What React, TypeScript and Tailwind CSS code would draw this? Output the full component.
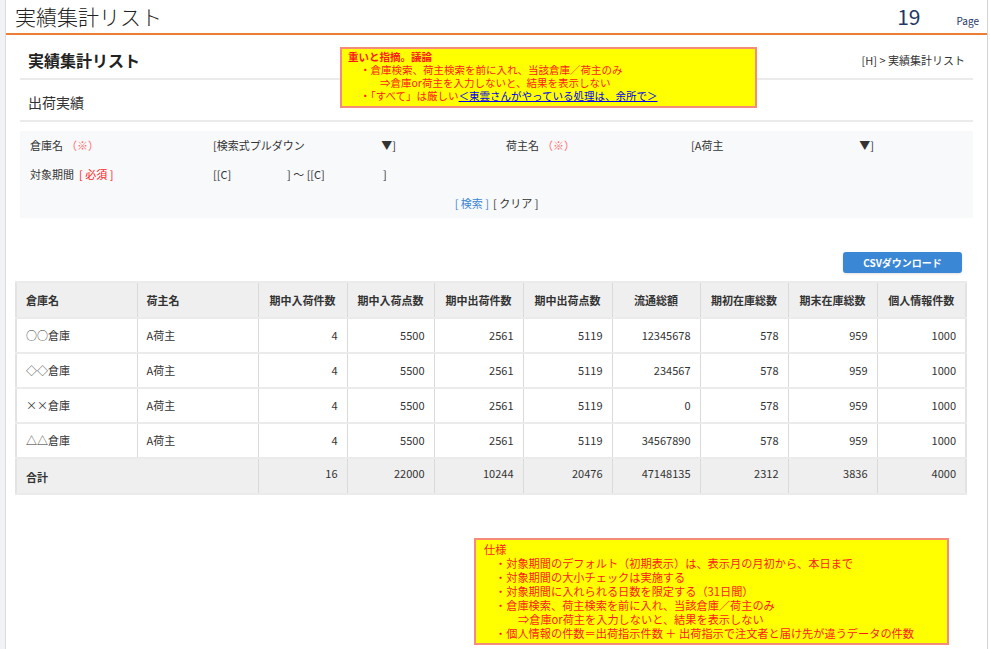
import React from "react";

const font = { fontFamily: '"Noto Sans CJK JP", "Noto Sans", sans-serif' };

type Row = {
  warehouse: string;
  shipper: string;
  values: number[];
};

const rows: Row[] = [
  { warehouse: "○○倉庫", shipper: "A荷主", values: [4, 5500, 2561, 5119, 12345678, 578, 959, 1000] },
  { warehouse: "◇◇倉庫", shipper: "A荷主", values: [4, 5500, 2561, 5119, 234567, 578, 959, 1000] },
  { warehouse: "××倉庫", shipper: "A荷主", values: [4, 5500, 2561, 5119, 0, 578, 959, 1000] },
  { warehouse: "△△倉庫", shipper: "A荷主", values: [4, 5500, 2561, 5119, 34567890, 578, 959, 1000] },
];

const totals = [16, 22000, 10244, 20476, 47148135, 2312, 3836, 4000];

const numberHeads = [
  "期中入荷件数",
  "期中入荷点数",
  "期中出荷件数",
  "期中出荷点数",
  "流通総額",
  "期初在庫総数",
  "期末在庫総数",
  "個人情報件数",
];

const colWidths = [121, 121, 89, 87, 89, 89, 88, 88, 89, 89];

const cell = "border-x border-x-[#dadada] border-y-2 border-y-[#ebebeb]";

function SearchPanel() {
  return (
    <div className="mt-[9px] bg-[#f8f9fb] pl-[10px] text-[11px] text-[#333]">
      <div className="grid h-[29px] grid-cols-[183px_293px_185px_1fr] items-center">
        <div>
          倉庫名<span className="ml-[3px] text-[#ff6b6b]">（※）</span>
        </div>
        <div className="flex w-[183px] justify-between">
          <span>[検索式プルダウン</span>
          <span>▼]</span>
        </div>
        <div>
          荷主名<span className="ml-[3px] text-[#ff6b6b]">（※）</span>
        </div>
        <div className="flex w-[183px] justify-between">
          <span>[A荷主</span>
          <span>▼]</span>
        </div>
      </div>
      <div className="grid h-[29px] grid-cols-[183px_293px_185px_1fr] items-center">
        <div>
          対象期間<span className="ml-[5px] text-[#ff2020]">[ 必須 ]</span>
        </div>
        <div className="flex">
          <span className="w-[74px]">[[C]</span>
          <span className="w-[96px]">] ～ [[C]</span>
          <span>]</span>
        </div>
      </div>
      <div className="flex h-[29px] items-center justify-center pr-[10px]">
        <span className="text-[#3b87d6]">[ 検索 ]</span>
        <span className="ml-[4px]">[ クリア ]</span>
      </div>
    </div>
  );
}

function ResultTable() {
  return (
    <table className="w-[950px] table-fixed border-collapse border-2 border-[#e3e3e3] text-[11px] text-[#333]">
      <colgroup>
        {colWidths.map((w, i) => (
          <col key={i} style={{ width: w }} />
        ))}
      </colgroup>
      <thead>
        <tr className="h-[36px] bg-[#efefef] font-bold">
          <th className={`${cell} pl-[9px] text-left`}>倉庫名</th>
          <th className={`${cell} pl-[9px] text-left`}>荷主名</th>
          {numberHeads.map((h) => (
            <th key={h} className={`${cell} text-center`}>
              {h}
            </th>
          ))}
        </tr>
      </thead>
      <tbody>
        {rows.map((r) => (
          <tr key={r.warehouse} className="h-[35px] bg-white">
            <td className={`${cell} pl-[9px]`}>{r.warehouse}</td>
            <td className={`${cell} pl-[9px]`}>{r.shipper}</td>
            {r.values.map((v, i) => (
              <td key={i} className={`${cell} pr-[9px] text-right`}>
                {v}
              </td>
            ))}
          </tr>
        ))}
        <tr className="h-[36px] bg-[#efefef]">
          <td colSpan={2} className={`${cell} pl-[9px] pt-[3px] font-bold`}>
            合計
          </td>
          {totals.map((v, i) => (
            <td key={i} className={`${cell} pb-[6px] pr-[9px] text-right`}>
              {v}
            </td>
          ))}
        </tr>
      </tbody>
    </table>
  );
}

export default function App() {
  return (
    <div className="flex min-h-screen bg-white" style={font}>
      <div className="w-[6px] shrink-0 border-r border-[#dadde2] bg-[#f1f2f5]" />

      <div className="relative w-[982px] shrink-0 border-r border-[#d4d4d4] pb-[10px]">
        {/* page header */}
        <header className="flex h-[35px] items-center justify-between border-b-2 border-[#ee7d35] pl-[9px] pr-[8px]">
          <h1 className="text-[21px] font-light leading-none text-[#222]">実績集計リスト</h1>
          <div className="flex items-baseline">
            <span className="text-[21px] leading-none text-[#1f3864]">19</span>
            <span className="ml-[36px] text-[10px] text-[#1f3864]">Page</span>
          </div>
        </header>

        <div className="px-[14px]">
          <div className="flex items-center justify-between border-b-2 border-[#ebebeb] pb-[8px] pl-[8px] pr-[8px] pt-[16px]">
            <h2 className="text-[16px] font-bold leading-[19px] text-[#222]">実績集計リスト</h2>
            <span className="text-[11px] text-[#333]">[H] &gt; 実績集計リスト</span>
          </div>
          <div className="border-b-2 border-[#ebebeb] pb-[9px] pl-[8px] pt-[13px] text-[14px] leading-[18px] text-[#333]">
            出荷実績
          </div>

          <SearchPanel />
        </div>

        <div className="pl-[9px] pr-[22px]">
          <div className="mt-[34px] flex justify-end pr-[3px]">
            <button className="h-[21px] w-[119px] rounded-[3px] bg-[#3a87d5] text-[10px] font-bold text-white shadow-sm">
              CSVダウンロード
            </button>
          </div>
          <div className="mt-[8px]">
            <ResultTable />
          </div>
        </div>

        {/* spec note */}
        <div className="ml-[468px] mt-[43px] w-[475px] border-2 border-[#f58b78] bg-[#ffff00] pb-[3px] pl-[8px] pt-[2px] text-[11.2px] leading-[14px] text-[#ff1a1a]">
          <div>仕様</div>
          <div className="pl-[11px]">・対象期間のデフォルト（初期表示）は、表示月の月初から、本日まで</div>
          <div className="pl-[11px]">・対象期間の大小チェックは実施する</div>
          <div className="pl-[11px]">・対象期間に入れられる日数を限定する（31日間）</div>
          <div className="pl-[11px]">・倉庫検索、荷主検索を前に入れ、当該倉庫／荷主のみ</div>
          <div className="pl-[34px]">⇒倉庫or荷主を入力しないと、結果を表示しない</div>
          <div className="pl-[11px]">・個人情報の件数＝出荷指示件数 ＋ 出荷指示で注文者と届け先が違うデータの件数</div>
        </div>

        {/* review note lying over the heading */}
        <div className="absolute left-[334px] top-[47px] w-[417px] border-2 border-[#f58b78] bg-[#ffff00] pb-[4px] pl-[6px] pt-[1px] text-[10.5px] leading-[13px] text-[#ff1a1a]">
          <div className="font-bold">重いと指摘。議論</div>
          <div className="pl-[12px]">・倉庫検索、荷主検索を前に入れ、当該倉庫／荷主のみ</div>
          <div className="pl-[32px]">⇒倉庫or荷主を入力しないと、結果を表示しない</div>
          <div className="pl-[12px]">
            ・「すべて」は厳しい
            <span className="text-[#0000ee] underline">＜東雲さんがやっている処理は、余所で＞</span>
          </div>
        </div>
      </div>
    </div>
  );
}
